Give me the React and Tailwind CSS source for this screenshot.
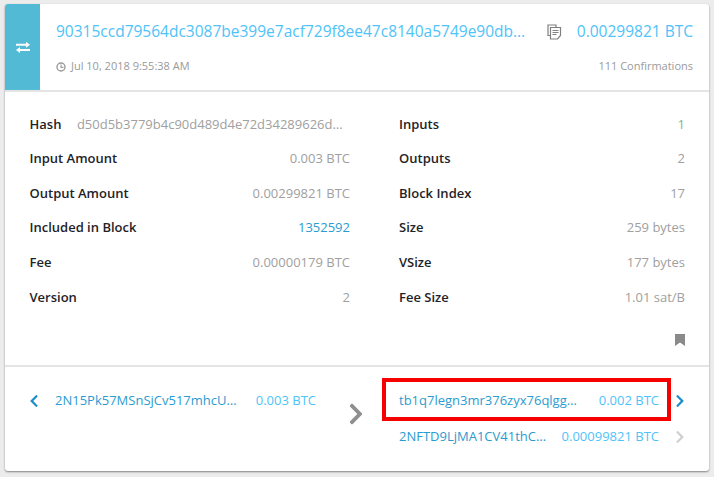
import { FaChevronLeft, FaChevronRight } from "react-icons/fa";

const leftRows = [
  { label: "Input Amount", value: "0.003 BTC" },
  { label: "Output Amount", value: "0.00299821 BTC" },
  { label: "Included in Block", value: "1352592", link: true },
  { label: "Fee", value: "0.00000179 BTC" },
  { label: "Version", value: "2" },
];

const rightRows = [
  { label: "Inputs", value: "1", green: true },
  { label: "Outputs", value: "2" },
  { label: "Block Index", value: "17" },
  { label: "Size", value: "259 bytes" },
  { label: "VSize", value: "177 bytes" },
  { label: "Fee Size", value: "1.01 sat/B" },
];

function Row({ label, value, link, green }) {
  let color = "text-[#a0a0a0]";
  if (link) color = "text-[#2b9ccf]";
  if (green) color = "text-[#7cb59a]";
  return (
    <div className="flex h-[34.6px] items-center justify-between">
      <span className="text-[13px] font-semibold text-[#1f2328]">{label}</span>
      <span className={`text-[13px] ${color}`}>{value}</span>
    </div>
  );
}

function CopyIcon() {
  return (
    <svg width="15" height="16" viewBox="0 0 15 16" fill="none" stroke="#808080" strokeWidth="1.2">
      <path d="M3.5 11.5H1V1h8v2" />
      <path d="M3.5 3.5h10v8l-3 3.5h-7z" fill="#fff" />
      <path d="M5.5 6.5h6M5.5 8.5h6M5.5 10.5h4" />
    </svg>
  );
}

function ClockIcon() {
  return (
    <svg width="10" height="10" viewBox="0 0 10 10" fill="none" stroke="#9a9a9a" strokeWidth="1.4">
      <circle cx="5" cy="5" r="4" />
      <path d="M5 2.5V5.4H7.4" strokeWidth="1.1" />
    </svg>
  );
}

function TransferIcon() {
  return (
    <svg width="14" height="11" viewBox="0 0 14 11" fill="#fff">
      <path d="M0 2h10V0l4 3-4 3V4H0z" transform="translate(0 -0.2)" />
      <path d="M14 7H4V5L0 8l4 3V9h10z" />
    </svg>
  );
}

function Output({ address, amount, addressClass, iconClass }) {
  return (
    <div className="flex h-[36px] items-center">
      <span className={`truncate text-[13px] text-[#2b9ccf] ${addressClass}`}>{address}</span>
      <span className="flex-1 whitespace-nowrap text-right text-[13px] text-[#4fc3f7]">{amount}</span>
      <FaChevronRight className={`ml-[14px] text-[14px] ${iconClass}`} />
    </div>
  );
}

export default function App() {
  return (
    <div className="h-[477px] w-[714px] bg-[#ececec] px-[5px] pt-1 font-['Open_Sans',sans-serif]">
      <div className="h-[467px] w-[704px] overflow-hidden rounded-[3px] bg-white shadow-[0_1px_2px_rgba(0,0,0,0.45)]">
        <div className="flex h-[88px] border-b-2 border-[#e4e4e4]">
          <div className="flex w-[35px] items-center justify-center bg-[#52bad5]">
            <TransferIcon />
          </div>
          <div className="flex-1 pl-4 pr-4">
            <div className="mt-[16px] flex items-center">
              <span className="w-[473px] truncate text-[15.5px] text-[#4fc3f7]">
                90315ccd79564dc3087be399e7acf729f8ee47c8140a5749e90dbc6b8d2ef5d1a
              </span>
              <span className="ml-[18px]"><CopyIcon /></span>
              <span className="flex-1 text-right text-[15.5px] text-[#4fc3f7]">0.00299821 BTC</span>
            </div>
            <div className="mt-[15px] flex items-center justify-between text-[11px] text-[#9a9a9a]">
              <span className="flex items-center gap-[5px]"><ClockIcon />Jul 10, 2018 9:55:38 AM</span>
              <span>111 Confirmations</span>
            </div>
          </div>
        </div>

        <div className="flex h-[275px] border-b-2 border-[#e4e4e4] pl-[24.5px] pr-6 pt-[15px]">
          <div className="w-[320.5px]">
            <div className="flex h-[34.6px] items-center">
              <span className="text-[13px] font-semibold text-[#1f2328]">Hash</span>
              <span className="ml-[15.5px] w-[267px] truncate text-[13px] text-[#a0a0a0]">
                d50d5b3779b4c90d489d4e72d34289626d4f1c7a
              </span>
            </div>
            {leftRows.map((row) => (
              <Row key={row.label} {...row} />
            ))}
          </div>
          <div className="ml-[49px] flex-1">
            {rightRows.map((row) => (
              <Row key={row.label} {...row} />
            ))}
            <div className="mt-[19px] flex justify-end">
              <svg width="10" height="12" viewBox="0 0 10 12" fill="#8a8a8a">
                <path d="M0 0h10v12L5 8.5 0 12z" />
              </svg>
            </div>
          </div>
        </div>

        <div className="flex pt-[16px]">
          <div className="flex h-[36px] w-[311px] items-center pl-[22px]">
            <FaChevronLeft className="text-[14px] text-[#1b8fc6]" />
            <span className="ml-[14px] w-[184px] truncate text-[13px] text-[#2b9ccf]">2N15Pk57MSnSjCv517mhcUa8b</span>
            <span className="flex-1 text-right text-[13px] text-[#4fc3f7]">0.003 BTC</span>
          </div>
          <div className="ml-[28px] mt-[19px] h-fit">
            <FaChevronRight className="text-[24px] text-[#8f8f8f]" />
          </div>
          <div className="relative ml-[21px] w-[298px] pl-[10px]">
            <Output
              address="tb1q7legn3mr376zyx76qlgg8h3kd2"
              amount="0.002 BTC"
              addressClass="w-[179px]"
              iconClass="text-[#1b8fc6]"
            />
            <Output
              address="2NFTD9LjMA1CV41thCx7kQ9pR3s"
              amount="0.00099821 BTC"
              addressClass="w-[148px]"
              iconClass="text-[#cfcfcf]"
            />
            <div className="absolute left-[-7px] top-[-5px] h-[43px] w-[289px] border-4 border-[#f60000]" />
          </div>
        </div>
      </div>
    </div>
  );
}
